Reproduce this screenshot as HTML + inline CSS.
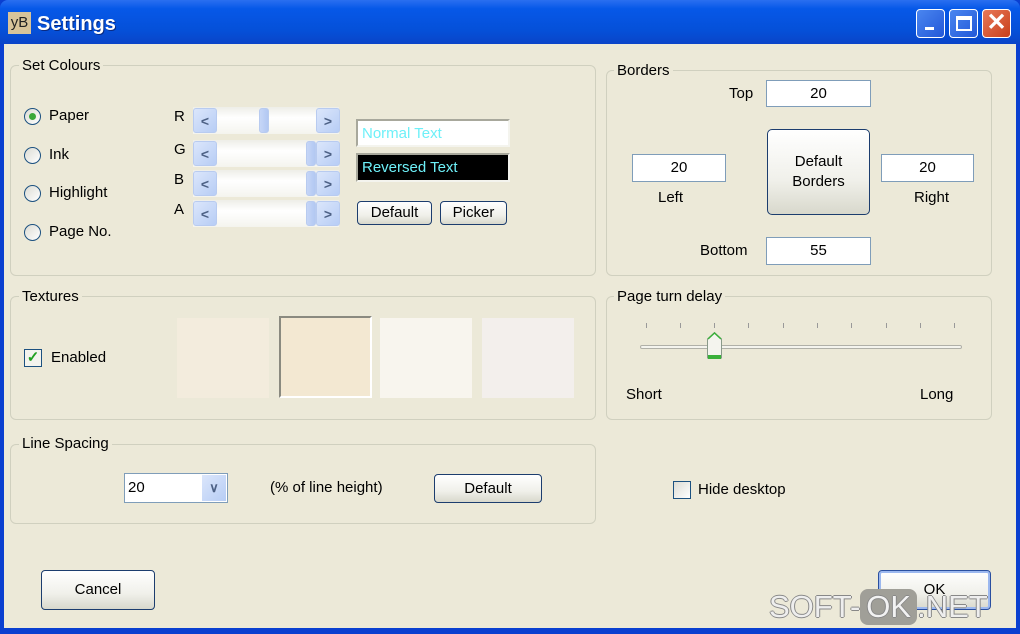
<!DOCTYPE html>
<html><head><style>
*{margin:0;padding:0;box-sizing:border-box}
body{width:1020px;height:634px;overflow:hidden;background:#0a3fd0;font-family:"Liberation Sans",sans-serif;font-size:15px;color:#000;position:relative}
.a{position:absolute}
#title{left:0;top:0;width:1020px;height:44px;background:linear-gradient(#2a6ff0,#0658e8 20%,#0550d8 70%,#0a44c8);border-radius:8px 8px 0 0}
#body{left:4px;top:44px;width:1012px;height:584px;background:#ece9d8}
.g{position:absolute;border:1px solid #d0d0bf;border-radius:6px}
.gl{position:absolute;background:#ece9d8;padding:0 3px;font-size:15px}
.btn{position:absolute;border:1px solid #1c3d6e;border-radius:4px;background:linear-gradient(#fff,#f0f0ea 60%,#d8d8cc);text-align:center;font-size:15px}
.tb{position:absolute;background:#fff;border:1px solid #7f9db9;text-align:center;font-size:15px}
.rad{position:absolute;width:17px;height:17px;border-radius:50%;border:1px solid #1c5180;background:linear-gradient(135deg,#dcdcd4,#fff)}
.sb{position:absolute;height:27px;width:146px;background:linear-gradient(#eeeee8,#fff 40%,#f4f4ee)}
.ar{position:absolute;top:1px;width:24px;height:25px;background:linear-gradient(135deg,#dbe6fb,#b7cdf5);border:1px solid #b8cbf0;border-radius:3px;color:#4d6185;font-size:14px;font-weight:bold;text-align:center;line-height:24px}
.th{position:absolute;top:1px;width:10px;height:25px;background:linear-gradient(90deg,#c6d6f7,#b2c8f2);border:1px solid #b8cbf0;border-radius:3px}
.tex{position:absolute;top:318px;width:92px;height:80px}
</style></head><body>
<div id="title" class="a"></div>
<div class="a" style="left:8px;top:12px;width:23px;height:22px;background:#d8c49a;font-size:15px;line-height:22px;text-align:center;color:#222">yB</div>
<div class="a" style="left:37px;top:13px;color:#fff;font-weight:bold;font-size:20px;text-shadow:1px 1px #0a2a80">Settings</div>
<div class="a" style="left:916px;top:9px;width:29px;height:29px;border:1px solid #fff;border-radius:4px;background:linear-gradient(135deg,#4a86f0,#2358d8)"><div class="a" style="left:8px;top:17px;width:9px;height:3px;background:#fff"></div></div>
<div class="a" style="left:949px;top:9px;width:29px;height:29px;border:1px solid #fff;border-radius:4px;background:linear-gradient(135deg,#4a86f0,#2358d8)"><div class="a" style="left:6px;top:6px;width:16px;height:15px;border:2px solid #fff;border-top-width:4px"></div></div>
<div class="a" style="left:982px;top:9px;width:29px;height:29px;border:1px solid #fff;border-radius:4px;background:linear-gradient(135deg,#e87858,#c8401c);color:#fff;font-size:24px;line-height:26px;text-align:center;font-weight:bold">✕</div>
<div id="body" class="a"></div>

<div class="g" style="left:10px;top:65px;width:586px;height:211px"></div>
<div class="gl" style="left:19px;top:57px">Set Colours</div>
<div class="rad" style="left:24px;top:108px"><div class="a" style="left:4px;top:4px;width:7px;height:7px;border-radius:50%;background:#3aa83a"></div></div>
<div class="a" style="left:49px;top:107px">Paper</div>
<div class="rad" style="left:24px;top:147px"></div><div class="a" style="left:49px;top:146px">Ink</div>
<div class="rad" style="left:24px;top:185px"></div><div class="a" style="left:49px;top:184px">Highlight</div>
<div class="rad" style="left:24px;top:224px"></div><div class="a" style="left:49px;top:223px">Page No.</div>
<div class="a" style="left:174px;top:108px">R</div>
<div class="a" style="left:174px;top:141px">G</div>
<div class="a" style="left:174px;top:171px">B</div>
<div class="a" style="left:174px;top:201px">A</div>
<div class="sb" style="left:193px;top:107px"><div class="ar" style="left:0">&lt;</div><div class="th" style="left:66px"></div><div class="ar" style="left:123px">&gt;</div></div>
<div class="sb" style="left:193px;top:140px"><div class="ar" style="left:0">&lt;</div><div class="th" style="left:113px"></div><div class="ar" style="left:123px">&gt;</div></div>
<div class="sb" style="left:193px;top:170px"><div class="ar" style="left:0">&lt;</div><div class="th" style="left:113px"></div><div class="ar" style="left:123px">&gt;</div></div>
<div class="sb" style="left:193px;top:200px"><div class="ar" style="left:0">&lt;</div><div class="th" style="left:113px"></div><div class="ar" style="left:123px">&gt;</div></div>
<div class="a" style="left:356px;top:119px;width:154px;height:28px;background:#fff;border:2px solid #a8a89c;border-right-color:#f4f4ee;border-bottom-color:#f4f4ee;color:#6ef0f8;padding:4px 4px;font-size:15px">Normal Text</div>
<div class="a" style="left:356px;top:153px;width:154px;height:29px;background:#000;border:2px solid #a8a89c;border-right-color:#f4f4ee;border-bottom-color:#f4f4ee;color:#6ef0f8;padding:4px 4px;font-size:15px">Reversed Text</div>
<div class="btn" style="left:357px;top:201px;width:75px;height:24px;line-height:22px">Default</div>
<div class="btn" style="left:440px;top:201px;width:67px;height:24px;line-height:22px">Picker</div>

<div class="g" style="left:606px;top:70px;width:386px;height:206px"></div>
<div class="gl" style="left:614px;top:62px">Borders</div>
<div class="a" style="left:729px;top:85px">Top</div>
<div class="tb" style="left:766px;top:80px;width:105px;height:27px;line-height:25px">20</div>
<div class="tb" style="left:632px;top:154px;width:94px;height:28px;line-height:26px">20</div>
<div class="a" style="left:658px;top:189px">Left</div>
<div class="btn" style="left:767px;top:129px;width:103px;height:86px;padding-top:22px;line-height:20px;border-radius:5px">Default<br>Borders</div>
<div class="tb" style="left:881px;top:154px;width:93px;height:28px;line-height:26px">20</div>
<div class="a" style="left:914px;top:189px">Right</div>
<div class="a" style="left:700px;top:242px">Bottom</div>
<div class="tb" style="left:766px;top:237px;width:105px;height:28px;line-height:26px">55</div>

<div class="g" style="left:10px;top:296px;width:586px;height:124px"></div>
<div class="gl" style="left:19px;top:288px">Textures</div>
<div class="a" style="left:24px;top:349px;width:18px;height:18px;border:1px solid #1c5180;background:#f4f4ee;color:#21a121;font-size:15px;line-height:16px;text-align:center;font-weight:bold">✓</div>
<div class="a" style="left:51px;top:349px">Enabled</div>
<div class="tex" style="left:177px;background:#f3ecdd"></div>
<div class="tex" style="left:279px;top:316px;width:93px;height:82px;background:#f3e8d2;border:2px solid #8a8a80;border-right-color:#fff;border-bottom-color:#fff"></div>
<div class="tex" style="left:380px;background:#f8f5ee"></div>
<div class="tex" style="left:482px;background:#f3efec"></div>

<div class="g" style="left:606px;top:296px;width:386px;height:124px"></div>
<div class="gl" style="left:614px;top:288px">Page turn delay</div>
<div class="a" style="left:640px;top:345px;width:322px;height:4px;border:1px solid #b0b0a8;border-radius:2px;background:#f4f4ee"></div>
<svg class="a" style="left:640px;top:320px" width="330" height="12"><g stroke="#999" stroke-width="1">
<line x1="6.5" y1="3" x2="6.5" y2="8"/><line x1="40.5" y1="3" x2="40.5" y2="8"/><line x1="74.5" y1="3" x2="74.5" y2="8"/><line x1="108.5" y1="3" x2="108.5" y2="8"/><line x1="143.5" y1="3" x2="143.5" y2="8"/><line x1="177.5" y1="3" x2="177.5" y2="8"/><line x1="211.5" y1="3" x2="211.5" y2="8"/><line x1="246.5" y1="3" x2="246.5" y2="8"/><line x1="280.5" y1="3" x2="280.5" y2="8"/><line x1="314.5" y1="3" x2="314.5" y2="8"/></g></svg>
<svg class="a" style="left:706px;top:331px" width="17" height="30"><path d="M1.5 8 L8.5 1.5 L15.5 8 V27 H1.5 Z" fill="#f4f4ee" stroke="#8a9a8a"/><path d="M2 24 H15 V28 H2Z" fill="#3ab03a"/><path d="M2 8 L8.5 2 L15 8" fill="none" stroke="#3ab03a" stroke-width="1.5"/></svg>
<div class="a" style="left:626px;top:386px">Short</div>
<div class="a" style="left:920px;top:386px">Long</div>

<div class="g" style="left:10px;top:444px;width:586px;height:80px"></div>
<div class="gl" style="left:19px;top:435px">Line Spacing</div>
<div class="a" style="left:124px;top:473px;width:104px;height:30px;background:#fff;border:1px solid #7f9db9;padding:5px 3px">20</div>
<div class="a" style="left:202px;top:475px;width:24px;height:26px;background:linear-gradient(135deg,#dbe6fb,#b7cdf5);color:#4d6185;font-size:13px;font-weight:bold;text-align:center;line-height:26px">∨</div>
<div class="a" style="left:270px;top:479px">(% of line height)</div>
<div class="btn" style="left:434px;top:474px;width:108px;height:29px;line-height:27px">Default</div>

<div class="a" style="left:673px;top:481px;width:18px;height:18px;border:1px solid #1c5180;background:linear-gradient(135deg,#dcdcd4,#fff)"></div>
<div class="a" style="left:698px;top:481px">Hide desktop</div>

<div class="btn" style="left:41px;top:570px;width:114px;height:40px;line-height:38px">Cancel</div>
<div class="btn" style="left:878px;top:570px;width:113px;height:40px;line-height:38px;border-color:#2a4fa0;box-shadow:inset 0 0 0 2px #9cb8ef">OK</div>
<div class="a" style="left:769px;top:589px;font-size:31px;color:#eeeeee;text-shadow:-1px 0 #888,1px 0 #888,0 -1px #888,0 1px #888">SOFT-<span style="display:inline-block;background:#a09f98;border-radius:8px;padding:0 6px;color:#f2f2f2">OK</span>.NET</div>
</body></html>
